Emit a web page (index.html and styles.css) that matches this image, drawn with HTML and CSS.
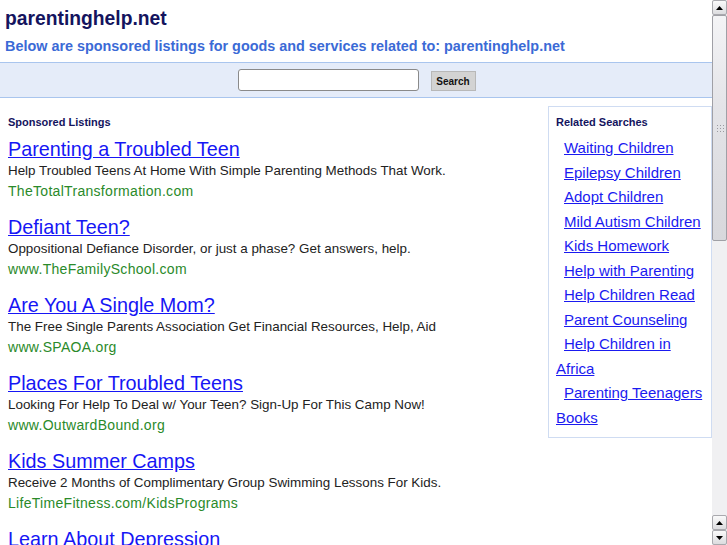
FILE: index.html
```html
<!DOCTYPE html>
<html>
<head>
<meta charset="utf-8">
<link rel="stylesheet" href="styles.css">
</head>
<body>
<div class="page">
  <header class="head">
    <h1 class="site">parentinghelp.net</h1>
    <p class="sub">Below are sponsored listings for goods and services related to: parentinghelp.net</p>
  </header>
  <form class="searchbar">
    <input class="q" type="text">
    <button class="btn" type="button">Search</button>
  </form>
  <div class="cols">
    <main class="listings">
      <h2 class="label">Sponsored Listings</h2>
      <div class="ad"><a class="t" href="#">Parenting a Troubled Teen</a><div class="d">Help Troubled Teens At Home With Simple Parenting Methods That Work.</div><div class="u">TheTotalTransformation.com</div></div>
      <div class="ad"><a class="t" href="#">Defiant Teen?</a><div class="d">Oppositional Defiance Disorder, or just a phase? Get answers, help.</div><div class="u">www.TheFamilySchool.com</div></div>
      <div class="ad"><a class="t" href="#">Are You A Single Mom?</a><div class="d">The Free Single Parents Association Get Financial Resources, Help, Aid</div><div class="u">www.SPAOA.org</div></div>
      <div class="ad"><a class="t" href="#">Places For Troubled Teens</a><div class="d">Looking For Help To Deal w/ Your Teen? Sign-Up For This Camp Now!</div><div class="u">www.OutwardBound.org</div></div>
      <div class="ad"><a class="t" href="#">Kids Summer Camps</a><div class="d">Receive 2 Months of Complimentary Group Swimming Lessons For Kids.</div><div class="u">LifeTimeFitness.com/KidsPrograms</div></div>
      <div class="ad"><a class="t" href="#">Learn About Depression</a><div class="d">Get the facts about depression and its treatment options.</div><div class="u">www.depression.com</div></div>
    </main>
    <aside class="related">
      <h2 class="label">Related Searches</h2>
      <ul class="rl">
        <li><a href="#">Waiting Children</a></li>
        <li><a href="#">Epilepsy Children</a></li>
        <li><a href="#">Adopt Children</a></li>
        <li><a href="#">Mild Autism Children</a></li>
        <li><a href="#">Kids Homework</a></li>
        <li><a href="#">Help with Parenting</a></li>
        <li><a href="#">Help Children Read</a></li>
        <li><a href="#">Parent Counseling</a></li>
        <li><a href="#">Help Children in Africa</a></li>
        <li><a href="#">Parenting Teenagers Books</a></li>
      </ul>
    </aside>
  </div>
</div>
<div class="sb">
  <div class="arr up1"><svg width="7" height="4" viewBox="0 0 7 4"><path d="M0 4L3.5 0L7 4Z" fill="#000"/></svg></div>
  <div class="track">
    <div class="thumb"><div class="grip"></div></div>
  </div>
  <div class="arr"><svg width="7" height="4" viewBox="0 0 7 4"><path d="M0 4L3.5 0L7 4Z" fill="#000"/></svg></div>
  <div class="arr"><svg width="7" height="4" viewBox="0 0 7 4"><path d="M0 0L3.5 4L7 0Z" fill="#000"/></svg></div>
</div>
</body>
</html>
```
FILE: styles.css
```css
html, body {
  margin: 0;
  padding: 0;
  height: 100%;
  overflow: hidden;
  background: #fff;
  font-family: "Liberation Sans", Arial, sans-serif;
}
.page {
  width: 712px;
}
.head {
  padding: 6px 5px 0 5px;
  height: 56px;
}
.site {
  margin: 0;
  font-size: 19.3px;
  line-height: 25px;
  font-weight: bold;
  color: #14145e;
}
.sub {
  margin: 6px 0 0 0;
  font-size: 14.4px;
  line-height: 18px;
  font-weight: bold;
  color: #3b6ad6;
}
.searchbar {
  margin: 0;
  height: 34px;
  background: #e5ecf9;
  border-top: 1px solid #a9c5ee;
  border-bottom: 1px solid #a9c5ee;
  display: flex;
  align-items: center;
  justify-content: center;
  gap: 12px;
  padding-left: 1px;
}
.q {
  width: 177px;
  height: 18px;
  margin: 0;
  padding: 1px;
  border: 1px solid #8a8a8a;
  border-radius: 3px;
  background: #fff;
}
.btn {
  margin: 2px 0 0 0;
  height: 20px;
  width: 45px;
  padding: 0;
  background: #d3d3d3;
  border: 1px solid #b8b8b8;
  font-family: "Liberation Sans", Arial, sans-serif;
  font-size: 10px;
  font-weight: bold;
  color: #111;
}
.cols {
  display: flex;
  align-items: flex-start;
}
.listings {
  flex: 1;
  padding: 17px 0 0 8px;
}
.label {
  margin: 0;
  font-size: 11px;
  line-height: 14px;
  font-weight: bold;
  color: #14145e;
}
.ad {
  margin-top: 5px;
  height: 73px;
}
.ad:first-of-type {
  margin-top: 8px;
}
.ad .t {
  display: block;
  font-size: 19.8px;
  line-height: 24px;
  color: #1616f5;
  text-decoration: underline;
}
.ad .d {
  font-size: 13.4px;
  line-height: 20px;
  color: #222;
}
.ad .u {
  font-size: 14px;
  letter-spacing: 0.3px;
  line-height: 20px;
  color: #2a8a2a;
}
.related {
  width: 148px;
  margin-top: 8px;
  border: 1px solid #cfdcf2;
  padding: 8px 7px 7px 7px;
}
.rl {
  list-style: none;
  margin: 7px 0 0 0;
  padding: 0;
}
.rl li {
  font-size: 15px;
  line-height: 24.5px;
  text-indent: 8px;
}
.rl a {
  color: #1a1af0;
  text-decoration: underline;
}
.sb {
  position: fixed;
  top: 0;
  right: 0;
  width: 15px;
  height: 545px;
  display: flex;
  flex-direction: column;
  background: #eeeef0;
}
.arr {
  height: 15px;
  box-sizing: border-box;
  border: 1px solid #a9a9ae;
  border-radius: 2px;
  background: linear-gradient(#fafafa, #dcdcdf);
  display: flex;
  align-items: center;
  justify-content: center;
}
.track {
  flex: 1;
  background: #f0f0f2;
  position: relative;
}
.thumb {
  position: absolute;
  left: 0;
  right: 0;
  top: 0;
  height: 226px;
  box-sizing: border-box;
  border: 1px solid #a0a0a6;
  border-radius: 2px;
  background: linear-gradient(#f4f4f6, #e4e4e8 40%, #d8d8dc);
  display: flex;
  align-items: center;
  justify-content: center;
}
.grip {
  width: 8px;
  height: 9px;
  background-image: radial-gradient(circle, #9a9aa0 0.8px, transparent 1px);
  background-size: 3px 3px;
}
```
